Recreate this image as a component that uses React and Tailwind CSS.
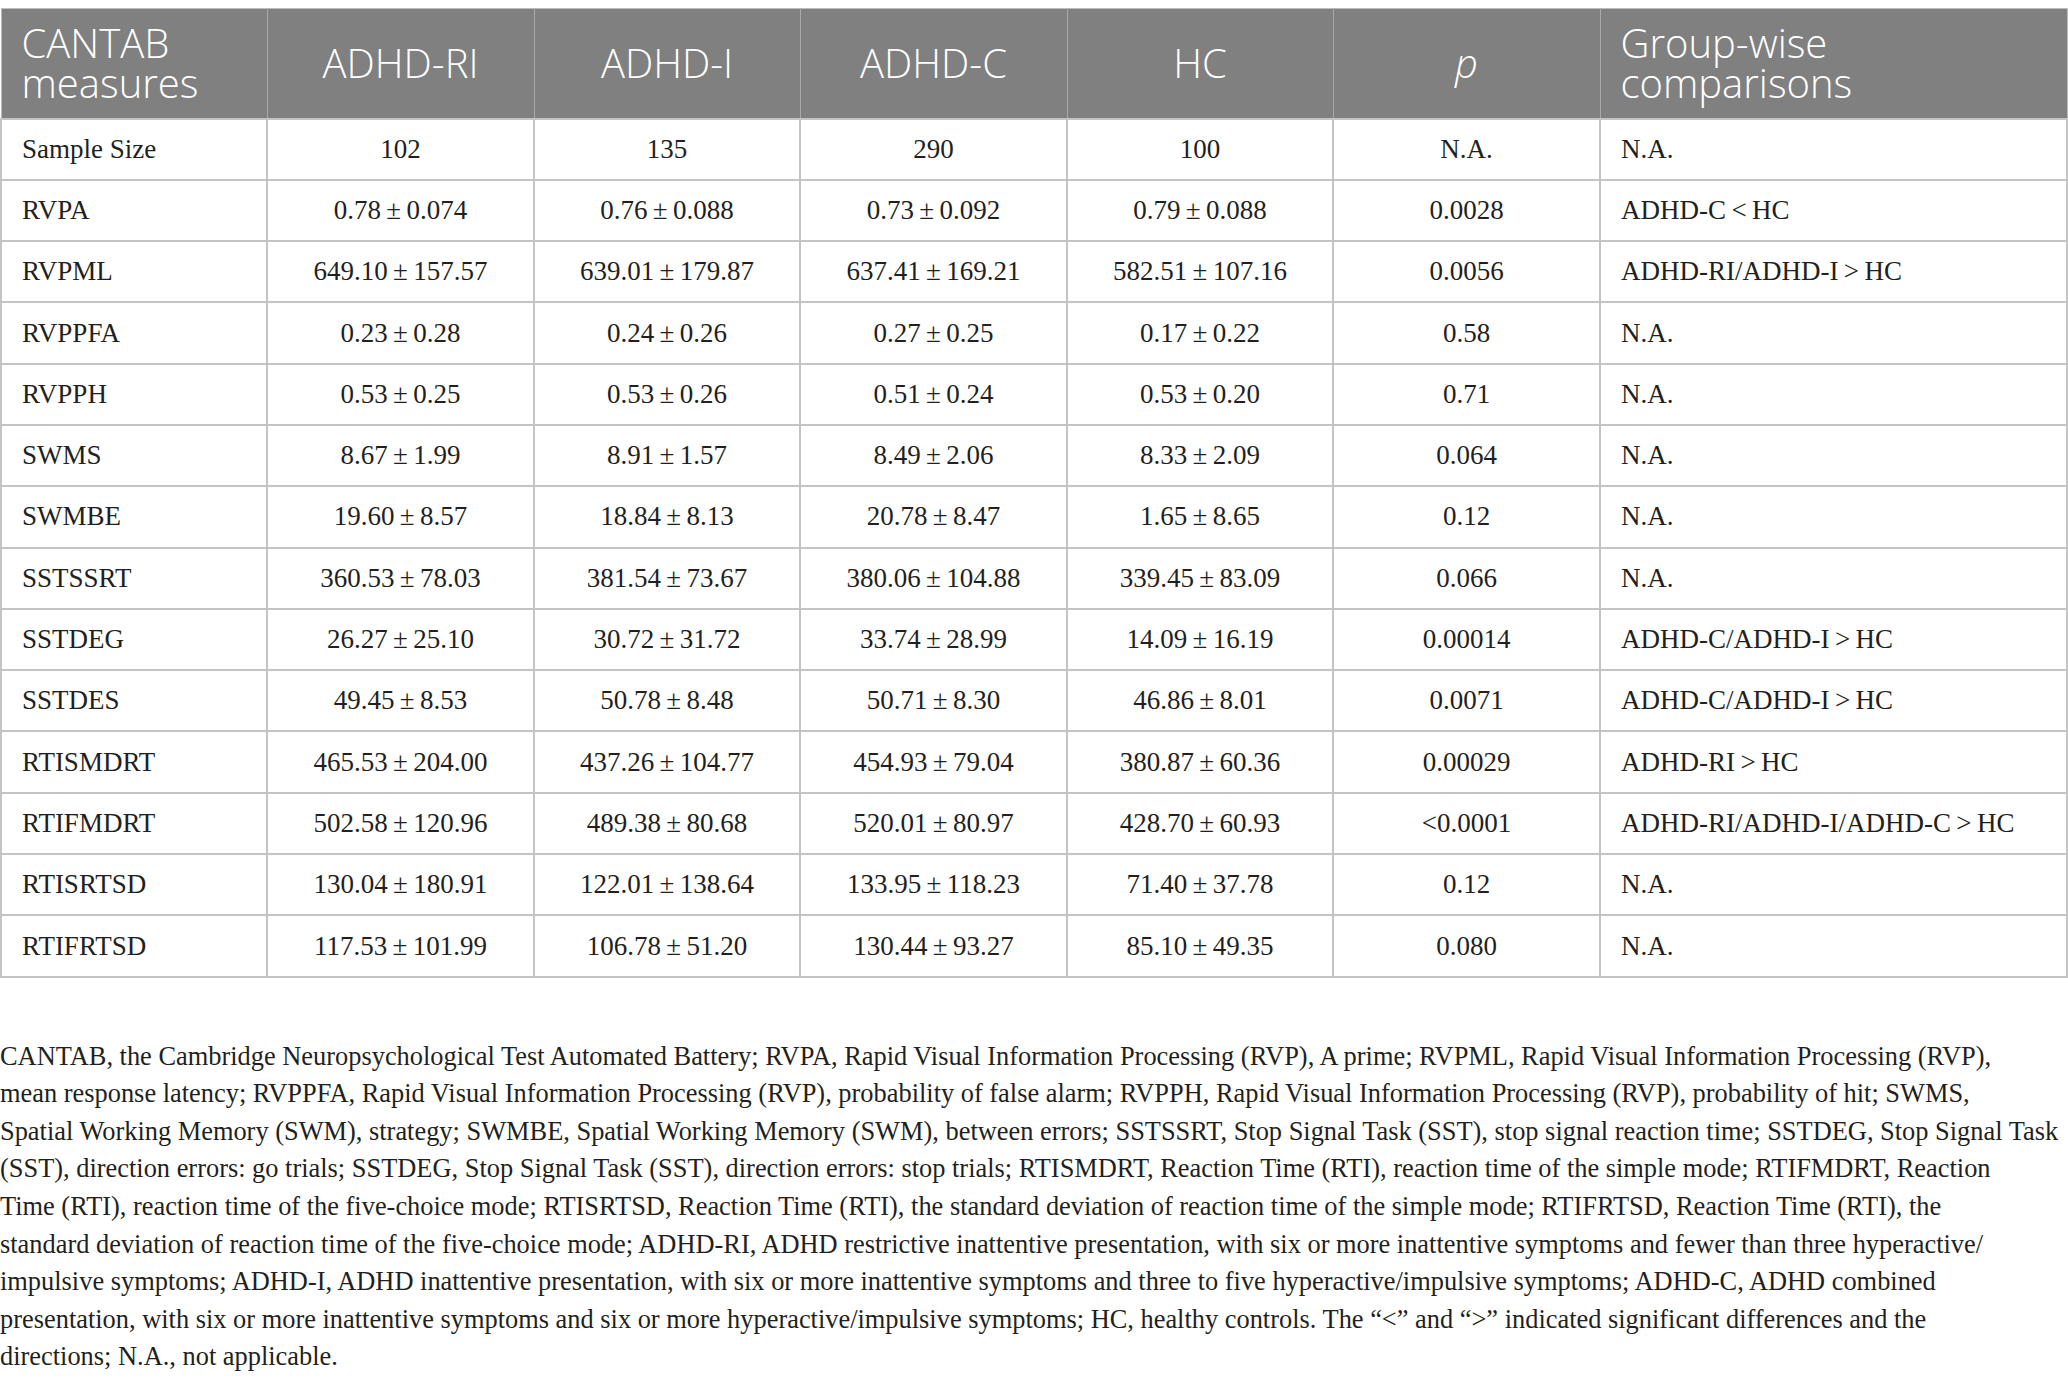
const rows = [
  ["Sample Size", "102", "135", "290", "100", "N.A.", "N.A."],
  ["RVPA", "0.78 ± 0.074", "0.76 ± 0.088", "0.73 ± 0.092", "0.79 ± 0.088", "0.0028", "ADHD-C < HC"],
  ["RVPML", "649.10 ± 157.57", "639.01 ± 179.87", "637.41 ± 169.21", "582.51 ± 107.16", "0.0056", "ADHD-RI/ADHD-I > HC"],
  ["RVPPFA", "0.23 ± 0.28", "0.24 ± 0.26", "0.27 ± 0.25", "0.17 ± 0.22", "0.58", "N.A."],
  ["RVPPH", "0.53 ± 0.25", "0.53 ± 0.26", "0.51 ± 0.24", "0.53 ± 0.20", "0.71", "N.A."],
  ["SWMS", "8.67 ± 1.99", "8.91 ± 1.57", "8.49 ± 2.06", "8.33 ± 2.09", "0.064", "N.A."],
  ["SWMBE", "19.60 ± 8.57", "18.84 ± 8.13", "20.78 ± 8.47", "1.65 ± 8.65", "0.12", "N.A."],
  ["SSTSSRT", "360.53 ± 78.03", "381.54 ± 73.67", "380.06 ± 104.88", "339.45 ± 83.09", "0.066", "N.A."],
  ["SSTDEG", "26.27 ± 25.10", "30.72 ± 31.72", "33.74 ± 28.99", "14.09 ± 16.19", "0.00014", "ADHD-C/ADHD-I > HC"],
  ["SSTDES", "49.45 ± 8.53", "50.78 ± 8.48", "50.71 ± 8.30", "46.86 ± 8.01", "0.0071", "ADHD-C/ADHD-I > HC"],
  ["RTISMDRT", "465.53 ± 204.00", "437.26 ± 104.77", "454.93 ± 79.04", "380.87 ± 60.36", "0.00029", "ADHD-RI > HC"],
  ["RTIFMDRT", "502.58 ± 120.96", "489.38 ± 80.68", "520.01 ± 80.97", "428.70 ± 60.93", "<0.0001", "ADHD-RI/ADHD-I/ADHD-C > HC"],
  ["RTISRTSD", "130.04 ± 180.91", "122.01 ± 138.64", "133.95 ± 118.23", "71.40 ± 37.78", "0.12", "N.A."],
  ["RTIFRTSD", "117.53 ± 101.99", "106.78 ± 51.20", "130.44 ± 93.27", "85.10 ± 49.35", "0.080", "N.A."],
];

const notes = [
  "CANTAB, the Cambridge Neuropsychological Test Automated Battery; RVPA, Rapid Visual Information Processing (RVP), A prime; RVPML, Rapid Visual Information Processing (RVP),",
  "mean response latency; RVPPFA, Rapid Visual Information Processing (RVP), probability of false alarm; RVPPH, Rapid Visual Information Processing (RVP), probability of hit; SWMS,",
  "Spatial Working Memory (SWM), strategy; SWMBE, Spatial Working Memory (SWM), between errors; SSTSSRT, Stop Signal Task (SST), stop signal reaction time; SSTDEG, Stop Signal Task",
  "(SST), direction errors: go trials; SSTDEG, Stop Signal Task (SST), direction errors: stop trials; RTISMDRT, Reaction Time (RTI), reaction time of the simple mode; RTIFMDRT, Reaction",
  "Time (RTI), reaction time of the five-choice mode; RTISRTSD, Reaction Time (RTI), the standard deviation of reaction time of the simple mode; RTIFRTSD, Reaction Time (RTI), the",
  "standard deviation of reaction time of the five-choice mode; ADHD-RI, ADHD restrictive inattentive presentation, with six or more inattentive symptoms and fewer than three hyperactive/",
  "impulsive symptoms; ADHD-I, ADHD inattentive presentation, with six or more inattentive symptoms and three to five hyperactive/impulsive symptoms; ADHD-C, ADHD combined",
  "presentation, with six or more inattentive symptoms and six or more hyperactive/impulsive symptoms; HC, healthy controls. The “<” and “>” indicated significant differences and the",
  "directions; N.A., not applicable.",
];

// thin spaces around the ± / < / > signs, as in the printed table
const thin = (s) => s.replace(/ ([±<>]) /g, "\u2009$1\u2009");

const HeadCell = ({ children, left }) => (
  <th
    className={`border-x border-[#a9a9a9] first:border-l-[#bdbdbd] last:border-r-[#bdbdbd] px-5 font-light text-[40px] leading-[40px] text-white ${
      left ? "text-left" : "text-center"
    }`}
  >
    {children}
  </th>
);

export default function App() {
  return (
    <div className="w-[2068px] min-h-[1384px] bg-white pt-2 text-[#231f20]">
      <table
        className="w-full table-fixed border-collapse"
        style={{ fontFamily: '"Liberation Serif", "Times New Roman", serif' }}
      >
        <colgroup>
          <col className="w-[266px]" />
          <col className="w-[267px]" />
          <col className="w-[266px]" />
          <col className="w-[267px]" />
          <col className="w-[266px]" />
          <col className="w-[267px]" />
          <col />
        </colgroup>
        <thead>
          <tr
            className="h-[110px] bg-[#7f807f] border-y border-[#bdbdbd]"
            style={{ fontFamily: '"Open Sans", "Noto Sans", sans-serif' }}
          >
            <HeadCell left>
              CANTAB
              <br />
              measures
            </HeadCell>
            <HeadCell>ADHD-RI</HeadCell>
            <HeadCell>ADHD-I</HeadCell>
            <HeadCell>ADHD-C</HeadCell>
            <HeadCell>HC</HeadCell>
            <HeadCell>
              <span className="italic">p</span>
            </HeadCell>
            <HeadCell left>
              Group-wise
              <br />
              comparisons
            </HeadCell>
          </tr>
        </thead>
        <tbody>
          {rows.map((r) => (
            <tr key={r[0]} className="h-[61.3px]">
              {r.map((c, i) => (
                <td
                  key={i}
                  className={`border-2 border-[#c4c4c4] px-5 text-[27px] leading-none whitespace-nowrap ${
                    i === 0 || i === 6 ? "text-left" : "text-center"
                  }`}
                >
                  {thin(c)}
                </td>
              ))}
            </tr>
          ))}
        </tbody>
      </table>

      <div
        className="mt-[60px] text-[26.4px] leading-[37.6px] whitespace-nowrap"
        style={{ fontFamily: '"Liberation Serif", "Times New Roman", serif' }}
      >
        {notes.map((n, i) => (
          <div key={i}>{n}</div>
        ))}
      </div>
    </div>
  );
}
